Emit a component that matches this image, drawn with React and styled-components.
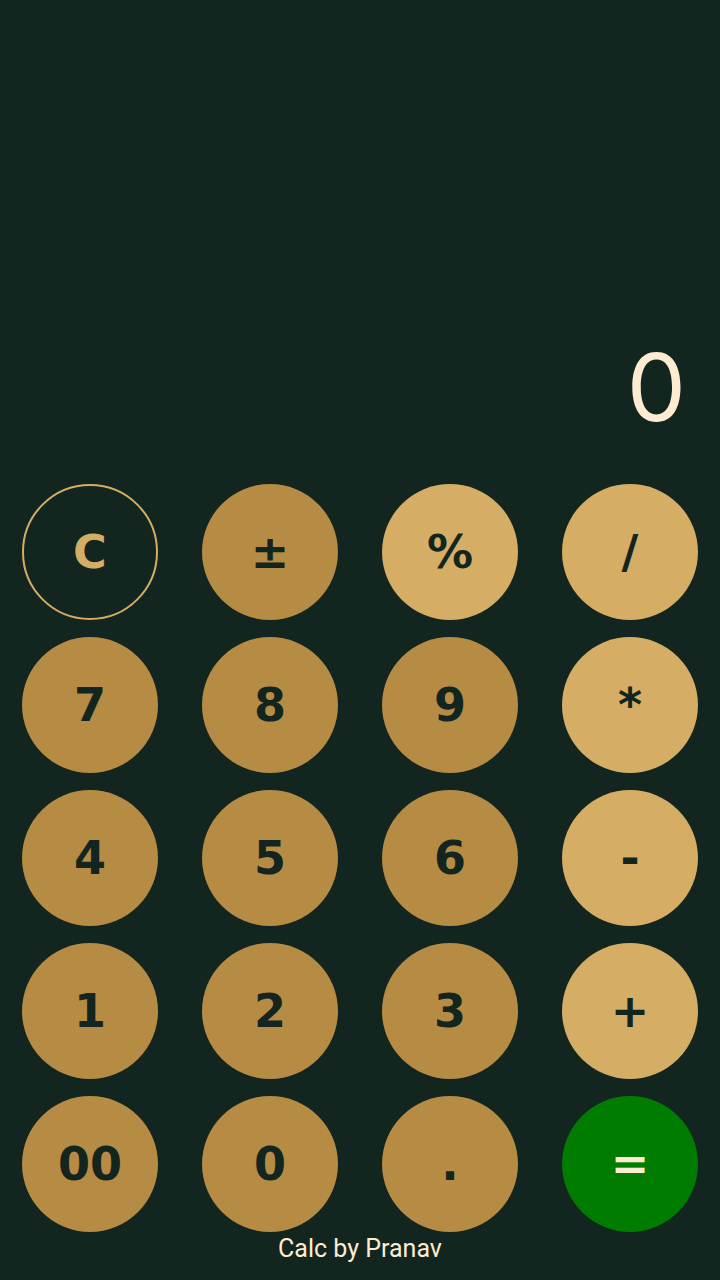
import React, { useState } from "react";
import styled, { createGlobalStyle } from "styled-components";

const GlobalStyle = createGlobalStyle`
  html, body { margin: 0; padding: 0; background: #12251f; }
  #root { min-height: 1280px; }
  * { box-sizing: border-box; }
`;

const Page = styled.div`
  min-height: 1280px;
  display: flex;
  flex-direction: column;
  background: #12251f;
`;

const Display = styled.div`
  flex: 1;
  display: flex;
  align-items: flex-end;
  justify-content: flex-end;
  padding: 0 34px 50px 0;
`;

const Value = styled.div`
  font-family: Inter, "Liberation Sans", sans-serif;
  font-weight: 400;
  font-size: 94px;
  line-height: 1;
  color: #fdecd2;
`;

const Keypad = styled.div`
  display: grid;
  grid-template-columns: repeat(4, 136px);
  grid-auto-rows: 136px;
  column-gap: 44px;
  row-gap: 17px;
  padding: 0 22px;
`;

const Key = styled.button`
  width: 136px;
  height: 136px;
  border-radius: 50%;
  border: ${(p) => (p.$variant === "clear" ? "2px solid #d4ad63" : "none")};
  background: ${(p) =>
    p.$variant === "clear"
      ? "transparent"
      : p.$variant === "op"
      ? "#d5ad64"
      : p.$variant === "equals"
      ? "#007c00"
      : "#b68b43"};
  color: ${(p) =>
    p.$variant === "clear"
      ? "#d5ad64"
      : p.$variant === "equals"
      ? "#fdecd2"
      : "#12251f"};
  font-family: "DejaVu Sans", "Liberation Sans", sans-serif;
  font-weight: 700;
  font-size: 46px;
  line-height: 1;
  display: flex;
  align-items: center;
  justify-content: center;
  padding: 0;
  cursor: pointer;
`;

const Footer = styled.div`
  height: 48px;
  display: flex;
  align-items: flex-start;
  justify-content: center;
  padding-top: 2px;
  font-family: Roboto, "Liberation Sans", sans-serif;
  font-size: 25px;
  color: #fdecd2;
`;

const keys = [
  ["C", "clear"], ["±", "num"], ["%", "op"], ["/", "op"],
  ["7", "num"], ["8", "num"], ["9", "num"], ["*", "op"],
  ["4", "num"], ["5", "num"], ["6", "num"], ["-", "op"],
  ["1", "num"], ["2", "num"], ["3", "num"], ["+", "op"],
  ["00", "num"], ["0", "num"], [".", "num"], ["=", "equals"],
];

export default function App() {
  const [value] = useState("0");
  return (
    <>
      <GlobalStyle />
      <Page>
        <Display>
          <Value>{value}</Value>
        </Display>
        <Keypad>
          {keys.map(([label, variant]) => (
            <Key key={label} $variant={variant}>
              {label}
            </Key>
          ))}
        </Keypad>
        <Footer>Calc by Pranav</Footer>
      </Page>
    </>
  );
}
